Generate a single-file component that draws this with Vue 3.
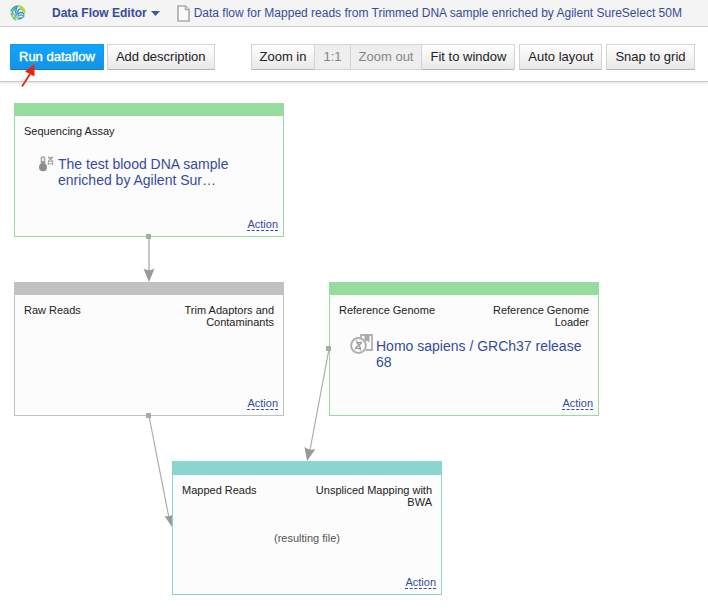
<script setup>
const nodes = [
  {
    id: 'assay', x: 14, y: 21, tone: 'green', title: 'Sequencing Assay', app: '',
    icon: 'sample', file: 'The test blood DNA sample enriched by Agilent Sur…',
  },
  { id: 'raw', x: 14, y: 200, tone: 'grey', title: 'Raw Reads', app: 'Trim Adaptors and Contaminants' },
  {
    id: 'genome', x: 329, y: 200, tone: 'green', title: 'Reference Genome', app: 'Reference Genome Loader',
    icon: 'genome', file: 'Homo sapiens / GRCh37 release 68',
  },
  {
    id: 'mapped', x: 172, y: 379, tone: 'teal', title: 'Mapped Reads', app: 'Unspliced Mapping with BWA',
    note: '(resulting file)',
  },
]
</script>

<template>
  <div class="page">
    <header class="topbar">
      <a href="#" class="logo" aria-label="Home">
        <svg width="16" height="16" viewBox="0 0 16 16" fill="none" stroke-linecap="round">
          <circle cx="8" cy="8" r="7.6" fill="#d9eef2" />
          <path d="M1 6 Q3 1.5 8 1 M2 10 Q2 5 6 3" stroke="#35a9a4" stroke-width="1.3" />
          <path d="M9 1 Q14 2 15 7 M10 3 Q13 4 13 7" stroke="#b5d63c" stroke-width="1.5" />
          <path d="M7 2 Q5 6 6 8 T4 14 M10 4 Q7 5 8 9" stroke="#2b87bd" stroke-width="1.2" />
          <path d="M1 9 Q3 13 6 15 M3 8 Q5 12 8 13" stroke="#8cc152" stroke-width="1.3" />
          <path d="M8 9 Q11 6 14 9 M8 11 Q11 9 14 11 M8 14 Q11 14 13 12" stroke="#3a8cc5" stroke-width="1.2" />
          <path d="M9 12.5 H13 M3 6 L5 5" stroke="#66c3ad" stroke-width="1" />
        </svg>
      </a>
      <button type="button" class="app-menu">
        Data Flow Editor
        <svg width="9" height="5" viewBox="0 0 9 5"><path d="M0 0H9L4.5 5Z" fill="#4059a0" /></svg>
      </button>
      <a href="#" class="doc">
        <svg width="13" height="17" viewBox="0 0 13 17" fill="#fafafa" stroke="#aaa" stroke-width="1.6">
          <path d="M1 1H8.5L12 4.5V16H1Z" /><path d="M8.5 1V4.5H12" />
        </svg>
        <span>Data flow for Mapped reads from Trimmed DNA sample enriched by Agilent SureSelect 50M</span>
      </a>
    </header>

    <div class="toolbar">
      <div class="group main-group">
        <div class="run">
          <button type="button" class="btn primary">Run dataflow</button>
          <svg class="pointer" width="16" height="24" viewBox="0 0 16 24">
            <path d="M2 22.5L10 10" stroke="#e3260c" stroke-width="1.8" />
            <path d="M14.5 0L5 7.5L14.5 12.5Z" fill="#e3260c" />
          </svg>
        </div>
        <button type="button" class="btn">Add description</button>
      </div>
      <div class="group">
        <div class="joined">
          <button type="button" class="btn">Zoom in</button>
          <button type="button" class="btn" disabled>1:1</button>
          <button type="button" class="btn" disabled>Zoom out</button>
          <button type="button" class="btn">Fit to window</button>
        </div>
        <button type="button" class="btn">Auto layout</button>
        <button type="button" class="btn">Snap to grid</button>
      </div>
    </div>

    <main class="canvas">
      <article
        v-for="n in nodes" :key="n.id" class="node" :class="n.tone"
        :style="{ left: n.x + 'px', top: n.y + 'px' }"
      >
        <div class="strip"></div>
        <div class="heads">
          <span>{{ n.title }}</span>
          <span class="app">{{ n.app }}</span>
        </div>
        <a v-if="n.file" href="#" class="file" :class="n.icon">
          <svg v-if="n.icon === 'sample'" width="15" height="16" viewBox="0 0 15 16" fill="none" stroke="#999">
            <path d="M2.3 9V2Q2.3 0.8 4 0.8T5.7 2V9" stroke-width="1.2" fill="#eee" />
            <path d="M4 5V10" stroke-width="2" />
            <circle cx="4" cy="11.2" r="4" fill="#8c8c8c" stroke="none" />
            <path d="M9.3 0.5C9.3 3.5 13.7 2.5 13.7 6V9M13.7 0.5C13.7 3.5 9.3 2.5 9.3 6V9M9.5 1.5H13.5M9.3 5.2H13.7M9.3 7.8H13.7" stroke="#a2a2a2" stroke-width="1.1" />
          </svg>
          <svg v-else width="23" height="20" viewBox="0 0 23 20" fill="none" stroke="#b0b0b0">
            <path d="M11 5V1H22V16H16" stroke-width="1.8" />
            <path d="M14.5 1H19.5V9L17 6.5L14.5 9Z" fill="#aaa" stroke="none" />
            <circle cx="8.5" cy="11.5" r="7.4" fill="#fcfcfc" stroke-width="2" />
            <path d="M6.8 6.5C5.5 11 12 11 10.2 16.5M11.8 7.5C11.5 12 5.5 11 5.2 15.5M6.8 8.3L11.3 9M5.8 14L10.4 14.6" stroke="#999" stroke-width="1.3" />
          </svg>
          <span>{{ n.file }}</span>
        </a>
        <p v-if="n.note" class="note">{{ n.note }}</p>
        <a href="#" class="action">Action</a>
      </article>

      <svg class="links" aria-hidden="true">
        <path d="M149 157V190" stroke="#c6c6c6" stroke-width="2" />
        <path d="M149 334L169 436M329 267L310 368" stroke="#acacac" stroke-width="1.2" fill="none" />
        <g fill="#999">
          <path d="M149 200L143.5 186.5Q149 190 154.5 186.5Z" />
          <path d="M307 379L304.5 365Q309 369 315.5 367Z" />
          <path d="M172 445V433Q169 435 164.5 434Z" />
        </g>
        <g fill="#aaa">
          <rect x="146" y="152" width="5" height="5" />
          <rect x="146" y="331" width="5" height="5" />
          <rect x="326" y="264" width="5" height="5" />
        </g>
      </svg>
    </main>
  </div>
</template>

<style>
body {
  margin: 0;
  background: #fff;
}
</style>

<style scoped>
.page {
  font-family: "Liberation Sans", Arial, sans-serif;
  color: #222;
}
a {
  color: #344c99;
  text-decoration: none;
}
button {
  font-family: inherit;
}
.topbar {
  display: flex;
  align-items: center;
  box-sizing: border-box;
  height: 27px;
  padding: 0 10px;
  background: #f4f4f4;
  border-bottom: 1px solid #ccc;
  font-size: 12px;
  white-space: nowrap;
}
.logo {
  display: flex;
  margin-right: 26px;
}
.app-menu {
  display: flex;
  align-items: center;
  gap: 4px;
  padding: 0;
  border: 0;
  background: none;
  color: #344c99;
  font-size: 12px;
  font-weight: bold;
}
.doc {
  display: flex;
  align-items: center;
  gap: 4px;
  margin-left: 17px;
}
.toolbar {
  display: flex;
  align-items: center;
  gap: 36px;
  box-sizing: border-box;
  height: 55px;
  padding: 5px 10px 0;
  border-bottom: 1px solid #ccc;
  box-shadow: 0 1px 3px #ddd;
}
.group {
  display: flex;
  gap: 4px;
}
.main-group {
  gap: 3px;
}
.joined {
  display: flex;
}
.joined .btn + .btn {
  border-left-width: 0;
}
.btn {
  box-sizing: border-box;
  height: 26px;
  padding: 0 8px;
  border: 1px solid #d4d4d4;
  border-bottom-color: #b4b4b4;
  border-radius: 1px;
  background: linear-gradient(#fff, #e8e8e8);
  color: #222;
  font-size: 13px;
  white-space: nowrap;
}
.btn:disabled {
  background: #eee;
  border-bottom-color: #d4d4d4;
  color: #858585;
}
.btn.primary {
  border-color: #1199e8;
  border-bottom-color: #0a7fc8;
  background: linear-gradient(#10a5ff, #1493e4);
  color: #fff;
  -webkit-text-stroke: 0.4px #fff;
}
.run {
  position: relative;
}
.pointer {
  position: absolute;
  left: 10px;
  top: 20px;
}
.canvas {
  position: relative;
  min-height: 531px;
}
.links {
  position: absolute;
  left: 0;
  top: 0;
  width: 100%;
  height: 100%;
  pointer-events: none;
}
.node {
  position: absolute;
  display: flex;
  flex-direction: column;
  box-sizing: border-box;
  width: 270px;
  height: 134px;
  border: 1px solid var(--tone);
  background: #fcfcfc;
  font-size: 11px;
  line-height: 12px;
}
.green {
  --tone: #96dc9f;
}
.grey {
  --tone: #c1c1c1;
}
.teal {
  --tone: #89d6d0;
}
.strip {
  height: 12px;
  background: var(--tone);
}
.teal .strip {
  height: 13px;
}
.heads {
  display: flex;
  justify-content: space-between;
  padding: 9px 9px 0;
}
.app {
  width: 120px;
  text-align: right;
}
.file {
  display: flex;
  align-items: flex-start;
  gap: 4px;
  padding: 19px 24px 0;
  font-size: 14px;
  line-height: 16px;
}
.file svg {
  flex: none;
}
.file.genome {
  padding: 6px 10px 0 20px;
  gap: 3px;
}
.file.genome span {
  padding-top: 4px;
}
.note {
  margin: 24px 0 0;
  color: #555;
  text-align: center;
}
.action {
  align-self: flex-end;
  margin: auto 5px 5px 0;
  border-bottom: 1px dashed #344c99;
}
</style>
